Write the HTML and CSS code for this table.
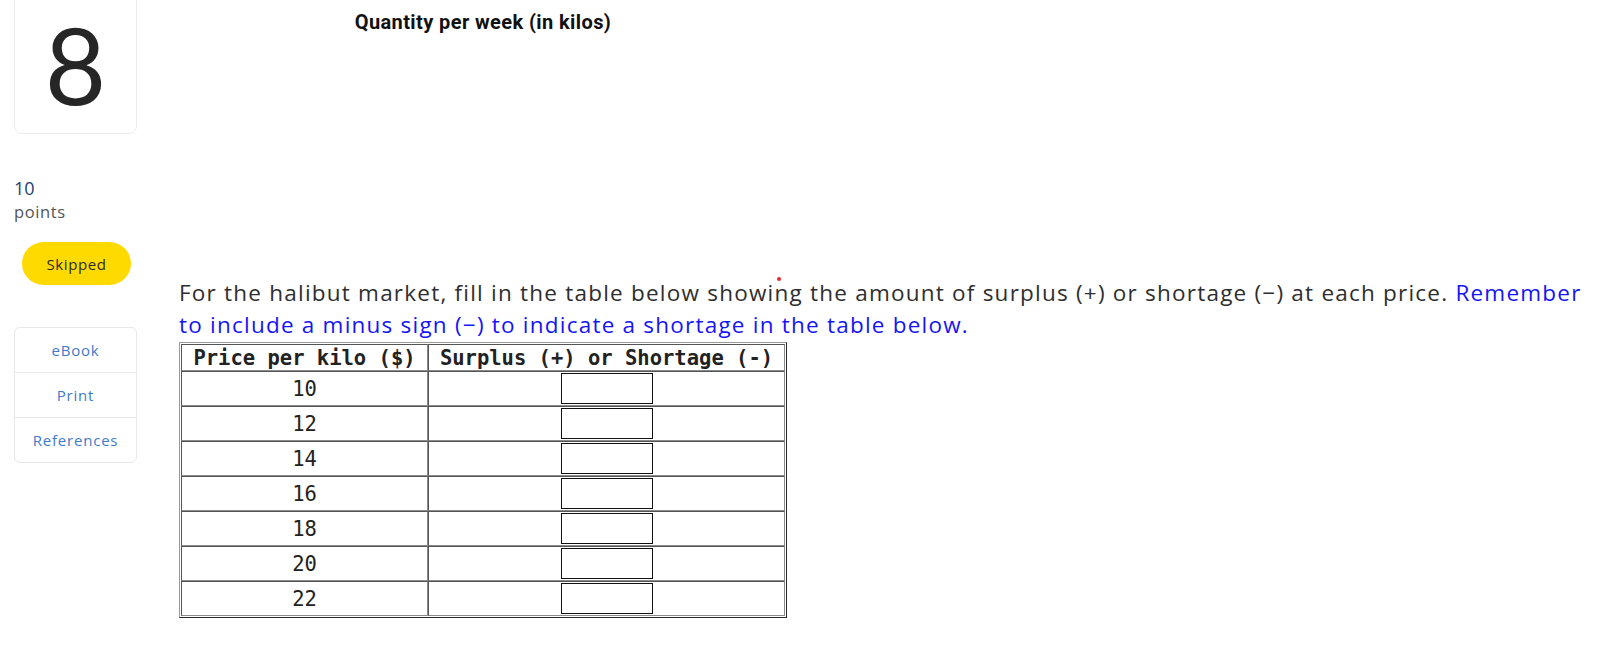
FILE: index.html
```html
<!DOCTYPE html>
<html>
<head>
<meta charset="utf-8">
<link rel="stylesheet" href="styles.css">
</head>
<body>
<div class="page">
  <aside class="sidebar">
    <div class="qcard"><span class="qnum">8</span></div>
    <div class="points">
      <div class="pts-num">10</div>
      <div class="pts-label">points</div>
    </div>
    <div class="status">Skipped</div>
    <nav class="tools">
      <a class="tool">eBook</a>
      <a class="tool">Print</a>
      <a class="tool">References</a>
    </nav>
  </aside>
  <main class="content">
    <div class="graph-title">Quantity per week (in kilos)</div>
    <p class="prompt"><span class="mark"></span>For the halibut market, fill in the table below showing the amount of surplus (+) or shortage (−) at each price. <span class="hint">Remember</span> <span class="hint">to include a minus sign (−) to indicate a shortage in the table below.</span></p>
    <table class="grid">
      <thead>
        <tr><th class="c1">Price per kilo ($)</th><th class="c2">Surplus (+) or Shortage (-)</th></tr>
      </thead>
      <tbody>
        <tr><td>10</td><td><span class="box"></span></td></tr>
        <tr><td>12</td><td><span class="box"></span></td></tr>
        <tr><td>14</td><td><span class="box"></span></td></tr>
        <tr><td>16</td><td><span class="box"></span></td></tr>
        <tr><td>18</td><td><span class="box"></span></td></tr>
        <tr><td>20</td><td><span class="box"></span></td></tr>
        <tr><td>22</td><td><span class="box"></span></td></tr>
      </tbody>
    </table>
  </main>
</div>
</body>
</html>
```
FILE: styles.css
```css
html, body {
  margin: 0;
  padding: 0;
  background: #fff;
}
body {
  font-family: "Open Sans", Lato, sans-serif;
  color: #333;
}
.page {
  display: flex;
  align-items: flex-start;
}
.sidebar {
  width: 165px;
  padding-left: 14px;
  box-sizing: border-box;
  display: flex;
  flex-direction: column;
  align-items: flex-start;
}
.qcard {
  width: 123px;
  height: 150px;
  margin-top: -16px;
  box-sizing: border-box;
  border: 1px solid #ececec;
  border-radius: 8px;
  display: flex;
  align-items: center;
  justify-content: center;
  padding-top: 10px;
}
.qnum {
  font-family: Lato, sans-serif;
  font-weight: 400;
  font-size: 106px;
  line-height: 1;
  color: #262626;
}
.points {
  margin-top: 42px;
}
.pts-num {
  font-size: 18px;
  line-height: 24px;
  color: #1d3e70;
}
.pts-label {
  font-size: 16.5px;
  letter-spacing: 0.6px;
  line-height: 24px;
  color: #555;
}
.status {
  margin-top: 18px;
  margin-left: 8px;
  width: 109px;
  height: 43px;
  border-radius: 22px;
  background: #ffda00;
  color: #2b2b2b;
  font-size: 15px;
  letter-spacing: 0.6px;
  display: flex;
  align-items: center;
  justify-content: center;
}
.tools {
  margin-top: 42px;
  width: 123px;
  border: 1px solid #e8e8e8;
  border-radius: 6px;
  box-sizing: border-box;
  display: flex;
  flex-direction: column;
}
.tool {
  height: 44px;
  display: flex;
  align-items: center;
  justify-content: center;
  font-size: 15px;
  letter-spacing: 0.8px;
  color: #3f7bc8;
}
.tool + .tool {
  border-top: 1px solid #e8e8e8;
}
.content {
  padding-left: 14px;
  width: 1415px;
}
.graph-title {
  width: 608px;
  text-align: center;
  font-family: Roboto, sans-serif;
  font-weight: 700;
  font-size: 20px;
  letter-spacing: 0.4px;
  line-height: 24px;
  margin-top: 10px;
  color: #111;
}
.prompt {
  position: relative;
  margin: 243px 0 0 0;
  font-size: 22.5px;
  letter-spacing: 1.22px;
  line-height: 32px;
  color: #2e2e2e;
}
.mark {
  position: absolute;
  left: 598px;
  top: 0px;
  width: 4px;
  height: 4px;
  border-radius: 50%;
  background: #e8262e;
}
.hint {
  color: #1515f5;
}
.grid {
  margin-top: 1px;
  width: 608px;
  table-layout: fixed;
  border-collapse: separate;
  border-spacing: 0;
  padding: 1px;
  border: 1px solid;
  border-color: #9a9a9a #2a2a2a #2a2a2a #9a9a9a;
  font-family: "DejaVu Sans Mono", monospace;
  font-size: 20.5px;
  color: #222;
}
.grid th, .grid td {
  border: 1px solid;
  border-color: #555 #8a8a8a #8a8a8a #555;
  text-align: center;
  padding: 0;
}
.grid th {
  height: 25px;
  font-weight: 700;
  white-space: nowrap;
}
.grid th.c1 {
  width: 245px;
}
.grid td {
  height: 33px;
}
.box {
  display: inline-block;
  vertical-align: middle;
  width: 90px;
  height: 29px;
  border: 1px solid #111;
}
```
